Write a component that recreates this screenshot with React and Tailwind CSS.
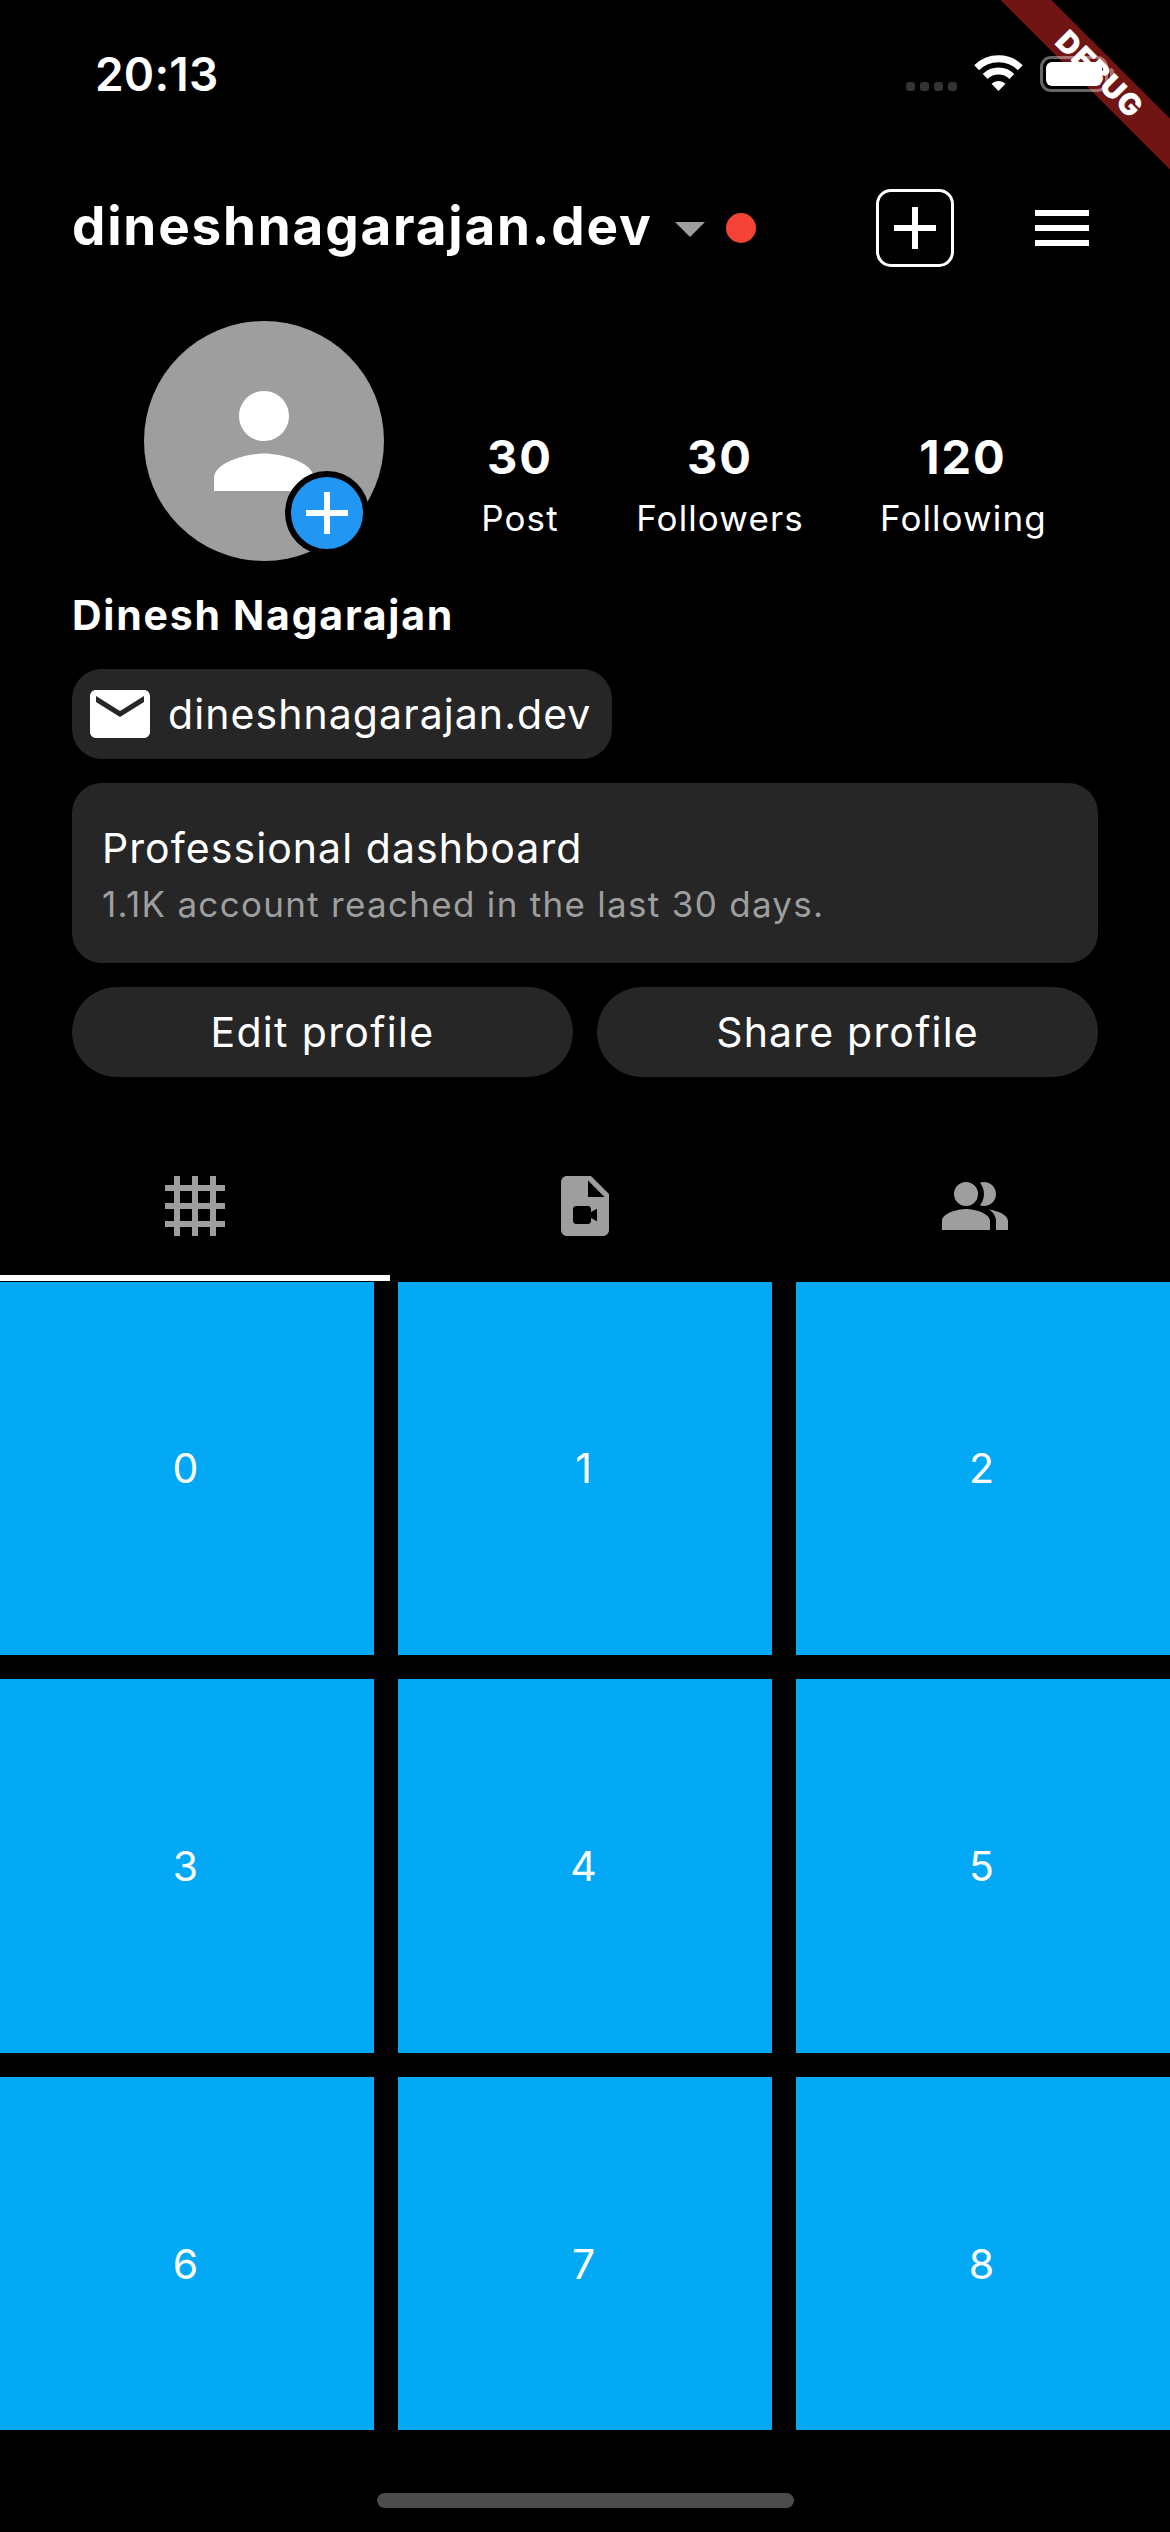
function Icon({ d, className }) {
  return (
    <svg viewBox="0 0 24 24" fill="currentColor" className={className}>
      <path d={d} />
    </svg>
  );
}

const ICONS = {
  caret: "M7 10l5 5 5-5z",
  plus: "M19 13h-6v6h-2v-6H5v-2h6V5h2v6h6v2z",
  menu: "M3 18h18v-2H3v2zm0-5h18v-2H3v2zm0-7v2h18V6H3z",
  person: "M12 12c2.21 0 4-1.79 4-4s-1.79-4-4-4-4 1.79-4 4 1.79 4 4 4zm0 2c-2.67 0-8 1.34-8 4v2h16v-2c0-2.66-5.33-4-8-4z",
  mail: "M20 4H4c-1.1 0-1.99.9-1.99 2L2 18c0 1.1.9 2 2 2h16c1.1 0 2-.9 2-2V6c0-1.1-.9-2-2-2zm0 4l-8 5-8-5V6l8 5 8-5v2z",
  grid: "M22 7V5h-3V2h-2v3h-4V2h-2v3H7V2H5v3H2v2h3v4H2v2h3v4H2v2h3v3h2v-3h4v3h2v-3h4v3h2v-3h3v-2h-3v-4h3v-2h-3V7h3zM7 7h4v4H7V7zm0 10v-4h4v4H7zm10 0h-4v-4h4v4zm0-6h-4V7h4v4z",
  video: "M14 2H6.01c-1.1 0-2 .89-2 2L4 20c0 1.1.89 2 1.99 2H18c1.1 0 2-.9 2-2V8l-6-6zM13 9V3.5L18.5 9H13zm1 5l2-1.06v4.12L14 16v1c0 .55-.45 1-1 1H9c-.55 0-1-.45-1-1v-4c0-.55.45-1 1-1h4c.55 0 1 .45 1 1v1z",
  people: "M16.67 13.13C18.04 14.06 19 15.32 19 17v3h4v-3c0-2.18-3.57-3.47-6.33-3.87zM9 4a4 4 0 1 0 0 8 4 4 0 0 0 0-8zM15 12c2.21 0 4-1.79 4-4s-1.79-4-4-4c-.47 0-.91.1-1.33.24C14.5 5.27 15 6.58 15 8s-.5 2.73-1.33 3.76c.42.14.86.24 1.33.24zM9 13c-2.67 0-8 1.34-8 4v3h16v-3c0-2.66-5.33-4-8-4z",
};

function StatusBar() {
  return (
    <div className="relative z-20 flex h-[141px] items-start justify-between pl-[95px] pr-[56px]">
      <span className="mt-[46px] text-[46px] leading-[56px] font-semibold tracking-[0.2px]">20:13</span>
      <div className="mt-[55px] flex items-start">
        <div className="mt-[27px] flex gap-[5px]">
          {[0, 1, 2, 3].map((n) => (
            <i key={n} className="size-[9px] rounded-[3px] bg-[#333]" />
          ))}
        </div>
        <svg viewBox="0 0 49 36" className="ml-[17px] h-[36px] w-[49px]" fill="none" stroke="#fff">
          <path d="M2.7 12.7a31 31 0 0 1 43.6 0" strokeWidth="7" />
          <path d="M11.2 21.4a19 19 0 0 1 26.6 0" strokeWidth="7" />
          <path d="M24.5 36l-7-7.2a10 10 0 0 1 14 0z" fill="#fff" stroke="none" />
        </svg>
        <div className="mt-px ml-[17px] flex items-center">
          <div className="h-[36px] w-[68px] rounded-[11px] border-3 border-white/40 p-[3px]">
            <div className="h-full w-full rounded-[6px] bg-white" />
          </div>
          <i className="ml-[2px] h-[12px] w-[4px] rounded-r-[4px] bg-white/40" />
        </div>
      </div>
    </div>
  );
}

function Header() {
  return (
    <div className="flex h-[174px] items-center pl-[72px] pr-[72px]">
      <h1 className="-mt-[3px] w-[582px] text-[53px] font-bold tracking-[1.8px] whitespace-nowrap">dineshnagarajan.dev</h1>
      <Icon d={ICONS.caret} className="size-[72px] text-[#9e9e9e]" />
      <i className="size-[30px] rounded-full bg-[#f44336]" />
      <div className="ml-auto flex size-[78px] items-center justify-center rounded-[15px] border-3 border-white">
        <Icon d={ICONS.plus} className="size-[72px] shrink-0" />
      </div>
      <Icon d={ICONS.menu} className="ml-[72px] size-[72px]" />
    </div>
  );
}

function Stat({ value, label, className }) {
  return (
    <div className={className}>
      <div className="text-[47px] leading-[58px] font-bold tracking-[2px]">{value}</div>
      <div className="mt-[10px] text-[35px] leading-[44px] tracking-[1.1px]">{label}</div>
    </div>
  );
}

export default function App() {
  return (
    <main className="relative h-[2532px] w-[1170px] overflow-hidden bg-black font-['Inter',sans-serif] text-white">
      <div className="absolute top-[52px] left-[926px] z-10 flex h-[36px] w-[340px] rotate-45 items-center justify-center bg-[#701414] pl-[11px] text-[30px] font-black tracking-[0.9px]">
        DEBUG
      </div>
      <StatusBar />
      <Header />
      <div className="flex h-[252px] pt-[6px] pl-[144px]">
        <div className="relative flex size-[240px] items-center justify-center rounded-full bg-[#9e9e9e]">
          <Icon d={ICONS.person} className="size-[150px]" />
          <div className="absolute right-[15px] bottom-[6px] flex size-[84px] items-center justify-center rounded-full border-6 border-black bg-[#2196f3]">
            <Icon d={ICONS.plus} className="size-[72px] shrink-0" />
          </div>
        </div>
        <div className="ml-[96px] flex gap-[76px] pt-[107px] text-center whitespace-nowrap">
          <Stat value="30" label="Post" className="w-[80px]" />
          <Stat value="30" label="Followers" className="w-[168px]" />
          <Stat value="120" label="Following" className="w-[166px]" />
        </div>
      </div>
      <section className="flex h-[588px] flex-col items-start px-[72px]">
        <h2 className="mt-[23px] text-[41px] leading-[50px] font-bold tracking-[1.75px]">Dinesh Nagarajan</h2>
        <div className="mt-[29px] flex h-[90px] w-[540px] shrink-0 items-center rounded-[30px] bg-[#262626] pl-[12px]">
          <Icon d={ICONS.mail} className="size-[72px]" />
          <span className="mt-[2px] ml-[12px] text-[41px] tracking-[1.07px]">dineshnagarajan.dev</span>
        </div>
        <div className="mt-[24px] h-[180px] w-full rounded-[30px] bg-[#262626] pt-[39px] pl-[30px]">
          <div className="text-[41px] leading-[52px] tracking-[1.07px]">Professional dashboard</div>
          <div className="mt-[8px] text-[35px] leading-[44px] tracking-[1.3px] text-[#9e9e9e]">1.1K account reached in the last 30 days.</div>
        </div>
        <div className="mt-[24px] grid w-full grid-cols-2 gap-[24px] text-[41px]">
          <button className="h-[90px] rounded-full bg-[#262626] pt-[2px] tracking-[1.35px]">Edit profile</button>
          <button className="h-[90px] rounded-full bg-[#262626] pt-[2px] tracking-[1.2px]">Share profile</button>
        </div>
      </section>
      <nav className="grid h-[126px] grid-cols-3 text-[#9e9e9e]">
        <div className="flex justify-center border-b-6 border-white pt-[15px]">
          <Icon d={ICONS.grid} className="size-[72px]" />
        </div>
        <div className="flex justify-center pt-[15px]">
          <Icon d={ICONS.video} className="size-[72px]" />
        </div>
        <div className="flex justify-center pt-[15px]">
          <Icon d={ICONS.people} className="size-[72px]" />
        </div>
      </nav>
      <div className="mt-px h-[1148px] overflow-hidden">
        <div className="-mt-px grid grid-cols-3 gap-[24px]">
          {[0, 1, 2, 3, 4, 5, 6, 7, 8].map((n) => (
            <div key={n} className="flex h-[374px] items-center justify-center bg-[#03a9f4] pt-px pr-[3px] text-[41px]">
              {n}
            </div>
          ))}
        </div>
      </div>
      <div className="mx-auto mt-[63px] h-[15px] w-[417px] rounded-full bg-[#4b4b4b]" />
    </main>
  );
}
